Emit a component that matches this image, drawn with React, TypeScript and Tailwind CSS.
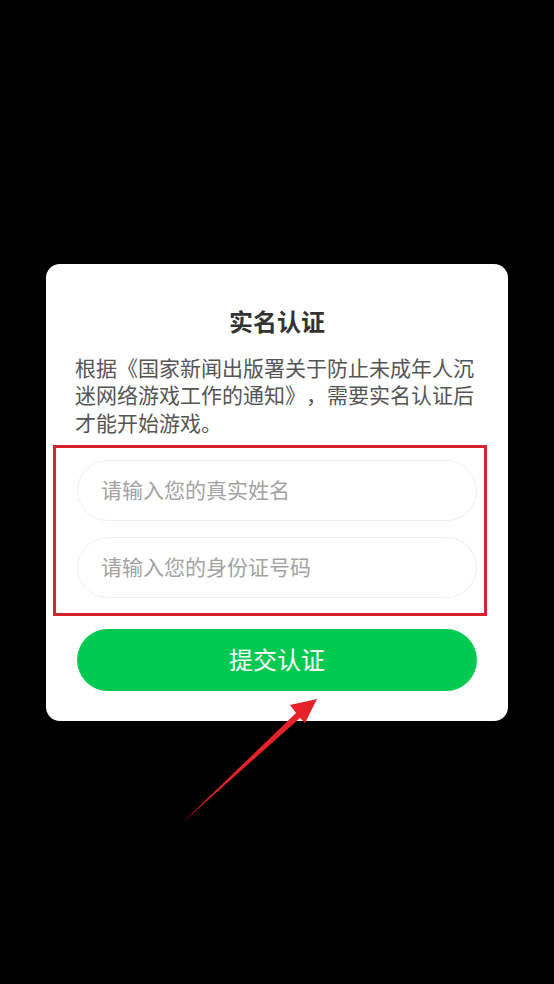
import React from "react";

export default function App() {
  return (
    <div
      className="relative flex h-[984px] w-full items-center justify-center bg-black"
      style={{ fontFamily: '"Noto Sans CJK SC", "Noto Sans", sans-serif' }}
    >
      <div className="flex w-[462px] flex-col rounded-[14px] bg-white px-[31px] pb-[30px] pt-[39px]">
        <h1 className="text-center text-[24px] font-bold leading-[36px] text-[#333333]">实名认证</h1>
        <p className="-ml-[2px] mt-[15px] w-[402px] text-[21px] leading-[27.5px] text-[#555555] [text-spacing-trim:space-all]">
          根据《国家新闻出版署关于防止未成年人沉迷网络游戏工作的通知》，需要实名认证后才能开始游戏。
        </p>
        <div className="relative mt-[23.5px] flex flex-col gap-[16px]">
          <input
            className="h-[61px] w-full rounded-full border border-[#f0f0f0] bg-white pb-[3px] pl-[23px] text-[21px] text-[#333] outline-none placeholder:text-[#a3a3a3]"
            placeholder="请输入您的真实姓名"
          />
          <input
            className="h-[61px] w-full rounded-full border border-[#f0f0f0] bg-white pb-[3px] pl-[23px] text-[21px] text-[#333] outline-none placeholder:text-[#a3a3a3]"
            placeholder="请输入您的身份证号码"
          />
          <div className="pointer-events-none absolute -bottom-[18px] -left-[24px] -right-[10px] -top-[15px] border-[3px] border-[#d7232b]" />
        </div>
        <button className="mt-[31px] h-[62px] w-full rounded-full bg-[#00c951] pb-[2px] text-[24px] leading-[60px] text-white">
          提交认证
        </button>
      </div>
      <svg
        className="pointer-events-none absolute left-0 top-0"
        width="554"
        height="984"
        viewBox="0 0 554 984"
      >
        <polygon points="317,699 290,705 296,713 182,823 300,718 305,723" fill="#e52129" />
      </svg>
    </div>
  );
}
